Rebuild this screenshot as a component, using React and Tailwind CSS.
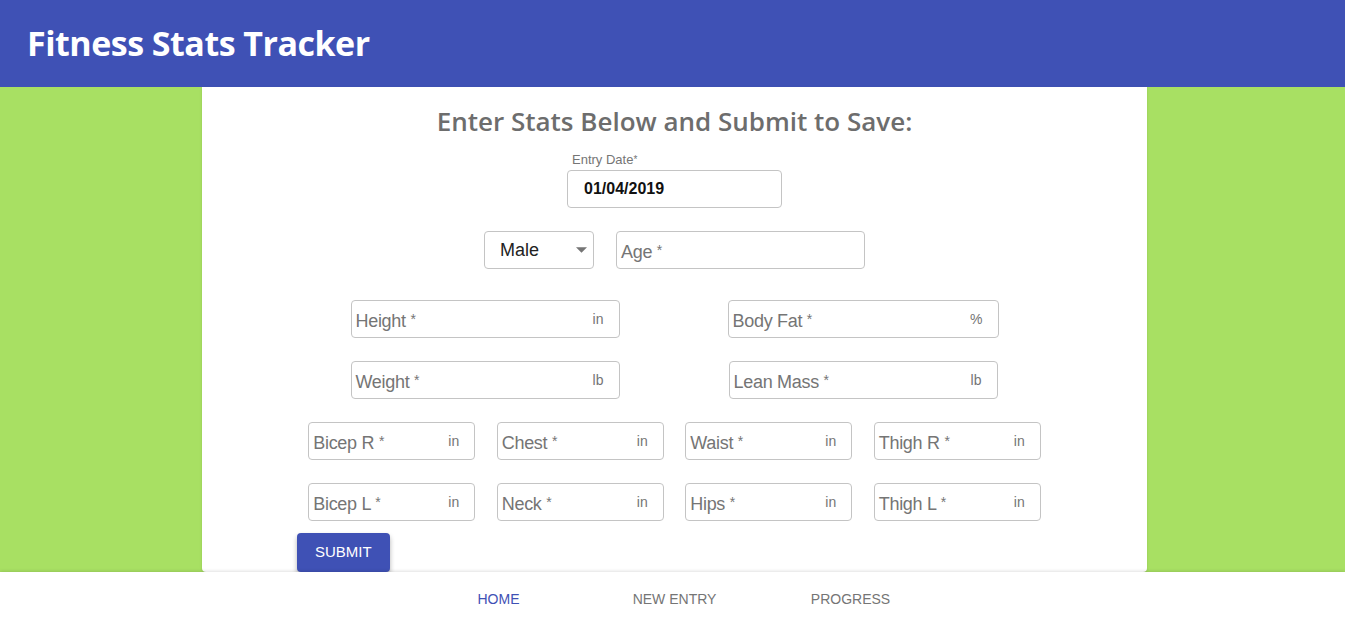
const unitFields = [
  [
    { label: "Bicep R", unit: "in" },
    { label: "Chest", unit: "in" },
    { label: "Waist", unit: "in" },
    { label: "Thigh R", unit: "in" },
  ],
  [
    { label: "Bicep L", unit: "in" },
    { label: "Neck", unit: "in" },
    { label: "Hips", unit: "in" },
    { label: "Thigh L", unit: "in" },
  ],
];

const font = { fontFamily: "'Liberation Sans', Arial, sans-serif" };

const Field = ({ label, unit, width }) => (
  <div
    className={`${width} h-[38px] flex items-center justify-between rounded-[4px] border border-[#c4c4c4] bg-white pl-[4px] pr-[15px]`}
  >
    <span className="text-[18px] text-[#757575] leading-none pt-[3px] tracking-[-0.3px]">
      {label} <span className="text-[14px] align-top">*</span>
    </span>
    {unit && <span className="text-[14px] text-[#757575] leading-none">{unit}</span>}
  </div>
);

export default function App() {
  return (
    <div className="min-h-[622px] flex flex-col bg-[#a8e063]" style={font}>
      {/* Header */}
      <header className="h-[87px] bg-[#3f51b5] flex items-center pl-[27px]">
        <h1
          className="text-white text-[34px] font-bold tracking-[-0.5px]"
          style={{ fontFamily: "'Open Sans', 'Noto Sans', sans-serif" }}
        >
          Fitness Stats Tracker
        </h1>
      </header>

      {/* Form card */}
      <main className="flex-1 flex justify-center pl-[4px]">
        <div className="w-[945px] h-[485px] bg-white rounded-b-[4px] shadow-sm flex flex-col items-center">
          <h2
            className="mt-[16px] text-[26px] font-semibold text-[#6d6d6d] leading-[36px]"
            style={{ fontFamily: "'Open Sans', 'Noto Sans', sans-serif" }}
          >
            Enter Stats Below and Submit to Save:
          </h2>

          {/* Entry date */}
          <div className="mt-[13px] flex flex-col items-start">
            <span className="ml-[5px] text-[13px] text-[#757575] leading-[15px]">
              Entry Date<span className="text-[10px] align-top">*</span>
            </span>
            <div className="mt-[3px] w-[215px] h-[38px] rounded-[4px] border border-[#c4c4c4] flex items-center pl-[16px]">
              <span className="text-[16px] font-bold text-[#111]">01/04/2019</span>
            </div>
          </div>

          {/* Sex + age */}
          <div className="mt-[23px] flex gap-[22px]">
            <div className="w-[110px] h-[38px] rounded-[4px] border border-[#c4c4c4] flex items-center justify-between pl-[15px] pr-[6px]">
              <span className="text-[18px] text-[#222]">Male</span>
              <svg width="11" height="6" viewBox="0 0 10 5">
                <path d="M0 0h10L5 5z" fill="#757575" />
              </svg>
            </div>
            <Field label="Age" width="w-[249px]" />
          </div>

          {/* Height / body fat */}
          <div className="mt-[31px] flex flex-col gap-[23px]">
            <div className="flex gap-[108px]">
              <Field label="Height" unit="in" width="w-[269px]" />
              <Field label="Body Fat" unit="%" width="w-[271px]" />
            </div>
            <div className="flex gap-[109px]">
              <Field label="Weight" unit="lb" width="w-[269px]" />
              <Field label="Lean Mass" unit="lb" width="w-[269px]" />
            </div>
          </div>

          {/* Measurements */}
          <div className="mt-[23px] flex flex-col gap-[23px]">
            {unitFields.map((row, i) => (
              <div key={i} className="flex gap-[21.5px]">
                {row.map((f) => (
                  <Field key={f.label} label={f.label} unit={f.unit} width="w-[167px]" />
                ))}
              </div>
            ))}
          </div>

          <div className="w-full mt-[12px] pl-[95px]">
            <button className="h-[39px] px-[18px] rounded-[4px] bg-[#3f51b5] text-white text-[15px] shadow-[0_3px_5px_rgba(0,0,0,0.3)]">
              SUBMIT
            </button>
          </div>
        </div>
      </main>

      {/* Bottom navigation */}
      <nav className="h-[50px] bg-white flex justify-center pl-[4px] shadow-[0_-1px_3px_rgba(0,0,0,0.12)]">
        {["HOME", "NEW ENTRY", "PROGRESS"].map((item, i) => (
          <div
            key={item}
            className={`w-[176px] flex items-center justify-center text-[14px] pt-[4px] ${
              i === 0 ? "text-[#3f51b5]" : "text-[#757575]"
            }`}
          >
            {item}
          </div>
        ))}
      </nav>
    </div>
  );
}
